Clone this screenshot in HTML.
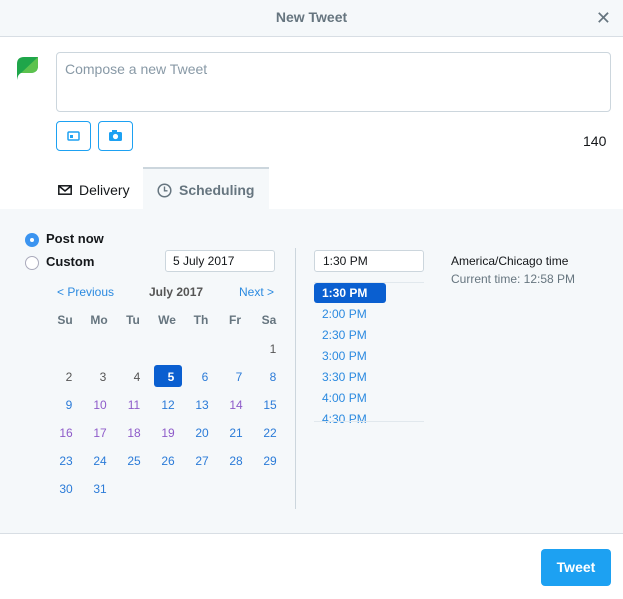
<!DOCTYPE html>
<html><head><style>
*{box-sizing:border-box;margin:0;padding:0}
body{width:623px;height:599px;font-family:"Liberation Sans",sans-serif;background:#fff;position:relative;overflow:hidden;font-size:13px;color:#14171a}
.a{position:absolute}
.hdr{left:0;top:0;width:623px;height:37px;background:#f5f8fa;border-bottom:1px solid #d8dee4;text-align:center;line-height:34px;font-weight:bold;font-size:14px;color:#66757f}
.ta{left:56px;top:52px;width:555px;height:60px;border:1px solid #ccd6dd;border-radius:4px;padding:8px;color:#8899a6;font-size:14px}
.btn{top:121px;width:35px;height:30px;border:1px solid #1da1f2;border-radius:4px}
.panel{left:0;top:209px;width:623px;height:324px;background:#f5f8fa}
.tab{top:167px;left:143px;width:126px;height:42px;background:#f5f8fa;border-top:2px solid #ccd6dd}
.cal div{position:absolute;width:34px;text-align:center;font-size:12px;color:#2b7bd8}
.hd{font-weight:bold;color:#66757f!important}
.p{color:#8e5bc9!important}
.g{color:#555!important}
.t{left:322px;font-size:12px;color:#2b8ae0}
</style></head><body>
<div class="a hdr">New Tweet</div>
<div class="a" style="right:12px;top:8px;font-size:18px;color:#66757f">✕</div>
<svg class="a" style="left:17px;top:56px" width="22" height="25" viewBox="0 0 22 25"><path d="M0 24 L0 8 Q0 1 7 1 L21 1 L21 10 Q21 17 13 17 L4 17 Q1 18 0 24Z" fill="#1fa64a"/><path d="M4 17 L21 1 L21 10 Q21 17 13 17Z" fill="#5cc24e"/></svg>
<div class="a ta">Compose a new Tweet</div>
<div class="a btn" style="left:56px"><svg width="33" height="28"><rect x="11" y="10" width="11" height="8" rx="1" fill="none" stroke="#1da1f2" stroke-width="1.5"/><rect x="13" y="13" width="3" height="3" fill="#1da1f2"/></svg></div>
<div class="a btn" style="left:98px"><svg width="33" height="28"><rect x="10" y="10" width="13" height="9" rx="1.5" fill="#1da1f2"/><rect x="13" y="8" width="5" height="3" fill="#1da1f2"/><circle cx="16.5" cy="14.5" r="2.6" fill="#fff"/></svg></div>
<div class="a" style="left:583px;top:133px;font-size:14px">140</div>
<div class="a panel"></div>
<div class="a tab"></div>
<svg class="a" style="left:58px;top:185px" width="14" height="10"><rect x="0.8" y="0.8" width="12.4" height="8.4" fill="none" stroke="#14171a" stroke-width="1.5"/><path d="M1 1 L7 6 L13 1" fill="none" stroke="#14171a" stroke-width="1.5"/></svg>
<div class="a" style="left:79px;top:182px;font-size:14px">Delivery</div>
<svg class="a" style="left:157px;top:183px" width="15" height="15"><circle cx="7.5" cy="7.5" r="6.3" fill="none" stroke="#66757f" stroke-width="1.5"/><path d="M7.5 3.5V7.8H10.5" fill="none" stroke="#66757f" stroke-width="1.4"/></svg>
<div class="a" style="left:179px;top:182px;font-size:14px;font-weight:bold;color:#66757f">Scheduling</div>
<div class="a" style="left:25px;top:233px;width:14px;height:14px;border-radius:50%;background:#3b94f0"><div style="margin:5px;width:4px;height:4px;border-radius:50%;background:#fff"></div></div>
<div class="a" style="left:46px;top:231px;font-weight:bold">Post now</div>
<div class="a" style="left:25px;top:256px;width:14px;height:14px;border-radius:50%;border:1px solid #aab;background:#fff"></div>
<div class="a" style="left:46px;top:254px;font-weight:bold">Custom</div>
<div class="a" style="left:165px;top:250px;width:110px;height:22px;background:#fff;border:1px solid #ccd6dd;border-radius:3px;padding:3px 7px;font-size:12px">5 July 2017</div>
<div class="a" style="left:57px;top:285px;font-size:12px;color:#2b8ae0">&lt; Previous</div>
<div class="a" style="left:149px;top:285px;font-size:12px;font-weight:bold;color:#555">July 2017</div>
<div class="a" style="left:239px;top:285px;font-size:12px;color:#2b8ae0">Next &gt;</div>
<div class="a" style="left:154px;top:365px;width:28px;height:22px;background:#0a5fd0;border-radius:3px"></div>
<div class="cal">
<div class="hd" style="left:48px;top:313px">Su</div><div class="hd" style="left:82px;top:313px">Mo</div><div class="hd" style="left:116px;top:313px">Tu</div><div class="hd" style="left:150px;top:313px">We</div><div class="hd" style="left:184px;top:313px">Th</div><div class="hd" style="left:218px;top:313px">Fr</div><div class="hd" style="left:252px;top:313px">Sa</div>
<div class="g" style="left:256px;top:342px">1</div>
<div class="g" style="left:52px;top:370px">2</div><div class="g" style="left:86px;top:370px">3</div><div class="g" style="left:120px;top:370px">4</div><div style="left:154px;top:370px;color:#fff;font-weight:bold;width:34px">5</div><div style="left:188px;top:370px">6</div><div style="left:222px;top:370px">7</div><div style="left:256px;top:370px">8</div>
<div style="left:52px;top:398px">9</div><div class="p" style="left:83px;top:398px">10</div><div class="p" style="left:117px;top:398px">11</div><div style="left:151px;top:398px">12</div><div style="left:185px;top:398px">13</div><div class="p" style="left:219px;top:398px">14</div><div style="left:253px;top:398px">15</div>
<div class="p" style="left:49px;top:426px">16</div><div class="p" style="left:83px;top:426px">17</div><div class="p" style="left:117px;top:426px">18</div><div class="p" style="left:151px;top:426px">19</div><div style="left:185px;top:426px">20</div><div style="left:219px;top:426px">21</div><div style="left:253px;top:426px">22</div>
<div style="left:49px;top:454px">23</div><div style="left:83px;top:454px">24</div><div style="left:117px;top:454px">25</div><div style="left:151px;top:454px">26</div><div style="left:185px;top:454px">27</div><div style="left:219px;top:454px">28</div><div style="left:253px;top:454px">29</div>
<div style="left:49px;top:482px">30</div><div style="left:83px;top:482px">31</div>
</div>
<div class="a" style="left:295px;top:248px;width:1px;height:261px;background:#ccd6dd"></div>
<div class="a" style="left:314px;top:250px;width:110px;height:22px;background:#fff;border:1px solid #ccd6dd;border-radius:3px;padding:3px 8px;font-size:12px">1:30 PM</div>
<div class="a" style="left:314px;top:282px;width:110px;height:1px;background:#e1e8ed"></div>
<div class="a" style="left:314px;top:283px;width:72px;height:20px;background:#0a5fd0;border-radius:3px;color:#fff;font-weight:bold;font-size:12px;padding:3px 8px">1:30 PM</div>
<div class="a t" style="top:307px">2:00 PM</div>
<div class="a t" style="top:328px">2:30 PM</div>
<div class="a t" style="top:349px">3:00 PM</div>
<div class="a t" style="top:370px">3:30 PM</div>
<div class="a t" style="top:391px">4:00 PM</div>
<div class="a t" style="top:412px">4:30 PM</div>
<div class="a" style="left:314px;top:421px;width:110px;height:1px;background:#e1e8ed"></div>
<div class="a" style="left:451px;top:254px;font-size:12px">America/Chicago time</div>
<div class="a" style="left:451px;top:272px;font-size:12px;color:#66757f">Current time: 12:58 PM</div>
<div class="a" style="left:0;top:533px;width:623px;height:1px;background:#d8dee4"></div>
<div class="a" style="left:541px;top:549px;width:70px;height:37px;background:#1da1f2;border-radius:4px;color:#fff;font-weight:bold;font-size:14px;text-align:center;line-height:37px">Tweet</div>
</body></html>
